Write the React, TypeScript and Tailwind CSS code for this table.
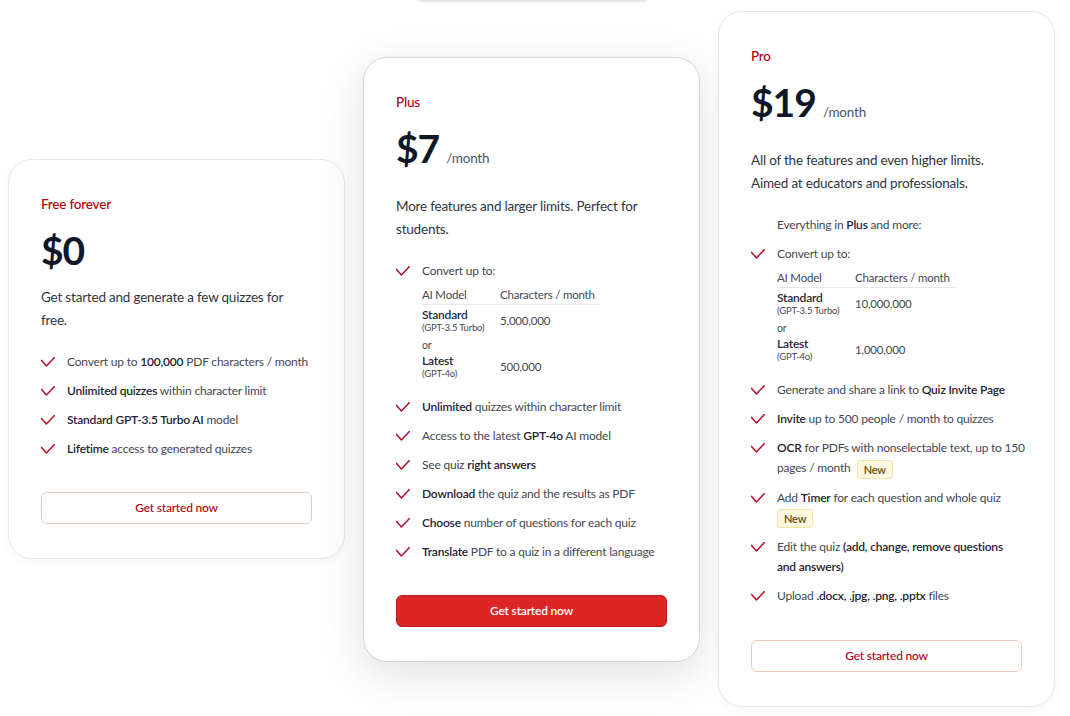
import type { ReactNode } from "react";

type Feature = { text: ReactNode; icon?: boolean };

const Check = () => (
  <svg
    width="14"
    height="10"
    viewBox="0 0 14 10"
    fill="none"
    className="mt-[5px] shrink-0"
  >
    <path
      d="M0.6 3.4 5.4 9 13.4 0.6"
      stroke="#b3102a"
      strokeWidth="1.5"
      strokeLinecap="round"
      strokeLinejoin="round"
    />
  </svg>
);

const NewBadge = () => (
  <span className="ml-[6px] inline-block rounded-[3px] border border-[#f1e6a8] bg-[#fdf9e1] px-[6px] align-middle text-[11px] leading-[17px] font-semibold text-[#6b4a0e]">
    New
  </span>
);

function ModelTable({ standard, latest }: { standard: string; latest: string }) {
  return (
    <div className="mt-[5px] mb-[8px] w-[178px] text-[11.5px] text-[#434852]">
      <div className="grid grid-cols-[78px_100px] border-b border-gray-200 leading-[18px]">
        <span>AI Model</span>
        <span>Characters / month</span>
      </div>
      <div className="grid grid-cols-[78px_100px] items-center pt-[3px]">
        <div className="flex flex-col">
          <span className="text-[12px] font-semibold leading-[14px] text-gray-800">Standard</span>
          <span className="text-[9.5px] leading-[12px]">(GPT-3.5 Turbo)</span>
        </div>
        <span>{standard}</span>
      </div>
      <div className="mt-[4px] text-[10.5px] leading-[14px]">or</div>
      <div className="grid grid-cols-[78px_100px] items-center pt-[2px]">
        <div className="flex flex-col">
          <span className="text-[12px] font-semibold leading-[14px] text-gray-800">Latest</span>
          <span className="text-[9.5px] leading-[12px]">(GPT-4o)</span>
        </div>
        <span>{latest}</span>
      </div>
    </div>
  );
}

const b = (s: string) => <strong className="font-semibold text-[#1f2430]">{s}</strong>;

const PLANS: {
  label: string;
  price: string;
  month: boolean;
  desc: ReactNode;
  features: Feature[];
  primary?: boolean;
  height: string;
}[] = [
  {
    label: "Free forever",
    price: "$0",
    month: false,
    desc: (
      <>
        Get started and generate a few quizzes for
        <br />
        free.
      </>
    ),
    height: "h-[400px]",
    features: [
      { text: <>Convert up to {b("100,000")} PDF characters / month</> },
      { text: <>{b("Unlimited quizzes")} within character limit</> },
      { text: <>{b("Standard GPT-3.5 Turbo AI")} model</> },
      { text: <>{b("Lifetime")} access to generated quizzes</> },
    ],
  },
  {
    label: "Plus",
    price: "$7",
    month: true,
    primary: true,
    desc: (
      <>
        More features and larger limits. Perfect for
        <br />
        students.
      </>
    ),
    height: "h-[605px]",
    features: [
      {
        text: (
          <>
            Convert up to:
            <ModelTable standard="5,000,000" latest="500,000" />
          </>
        ),
      },
      { text: <>{b("Unlimited")} quizzes within character limit</> },
      { text: <>Access to the latest {b("GPT-4o")} AI model</> },
      { text: <>See quiz {b("right answers")}</> },
      { text: <>{b("Download")} the quiz and the results as PDF</> },
      { text: <>{b("Choose")} number of questions for each quiz</> },
      { text: <>{b("Translate")} PDF to a quiz in a different language</> },
    ],
  },
  {
    label: "Pro",
    price: "$19",
    month: true,
    desc: (
      <>
        All of the features and even higher limits.
        <br />
        Aimed at educators and professionals.
      </>
    ),
    height: "h-[696px]",
    features: [
      { icon: false, text: <>Everything in {b("Plus")} and more:</> },
      {
        text: (
          <>
            Convert up to:
            <ModelTable standard="10,000,000" latest="1,000,000" />
          </>
        ),
      },
      { text: <>Generate and share a link to {b("Quiz Invite Page")}</> },
      { text: <>{b("Invite")} up to 500 people / month to quizzes</> },
      {
        text: (
          <>
            {b("OCR")} for PDFs with nonselectable text, up to 150
            <br />
            pages / month
            <NewBadge />
          </>
        ),
      },
      {
        text: (
          <>
            Add {b("Timer")} for each question and whole quiz
            <br />
            <span className="-ml-[6px]">
              <NewBadge />
            </span>
          </>
        ),
      },
      {
        text: (
          <>
            Edit the quiz {b("(add, change, remove questions")}
            <br />
            {b("and answers)")}
          </>
        ),
      },
      { text: <>Upload {b(".docx, .jpg, .png, .pptx")} files</> },
    ],
  },
];

function PlanCard({ plan }: { plan: (typeof PLANS)[number] }) {
  return (
    <div
      className={`flex w-[337px] shrink-0 flex-col rounded-[24px] border bg-white px-8 pt-[34px] pb-[34px] tracking-[-0.2px] ${plan.height} ${
        plan.primary
          ? "border-gray-300 shadow-[0_12px_45px_rgba(0,0,0,0.13)]"
          : "border-gray-200 shadow-[0_2px_10px_rgba(0,0,0,0.04)]"
      }`}
    >
      <p className="text-[13.5px] leading-[20px] font-medium text-[#b30012]">{plan.label}</p>
      <div className="mt-4 flex items-baseline">
        <span className="text-[39px] leading-[40px] font-bold tracking-[-1px] text-[#101828]">
          {plan.price}
        </span>
        {plan.month && <span className="ml-[7px] text-[13.5px] text-[#4b5563]">/month</span>}
      </div>
      <p
        className={`${plan.month ? "mt-[27px]" : "mt-4"} whitespace-nowrap text-[13.5px] leading-[23px] text-[#30353f]`}
      >
        {plan.desc}
      </p>
      <ul className="mt-5 flex flex-col gap-[9px] text-[12px] leading-[20px] text-[#434852]">
        {plan.features.map((f, i) => (
          <li key={i} className="flex gap-3">
            {f.icon === false ? <span className="w-[14px] shrink-0" /> : <Check />}
            <div className="whitespace-nowrap">{f.text}</div>
          </li>
        ))}
      </ul>
      <button
        className={`mt-auto h-8 w-full rounded-md border text-[12px] ${
          plan.primary
            ? "border-[#b91c1c] bg-[#dc2626] font-semibold text-white"
            : "border-[#f4c4c4] bg-white font-medium text-[#b30012]"
        }`}
      >
        Get started now
      </button>
    </div>
  );
}

export default function App() {
  return (
    <div
      className="h-[716px] w-[1070px] overflow-hidden bg-white"
      style={{ fontFamily: 'Lato, "Noto Sans", sans-serif' }}
    >
      <div className="-mt-[39px] ml-[413px] h-[40px] w-[239px] rounded-xl border border-gray-200 bg-white shadow-sm" />
      <div className="mt-[10px] flex items-center gap-[18px] pl-2">
        {PLANS.map((p) => (
          <PlanCard key={p.label} plan={p} />
        ))}
      </div>
    </div>
  );
}
